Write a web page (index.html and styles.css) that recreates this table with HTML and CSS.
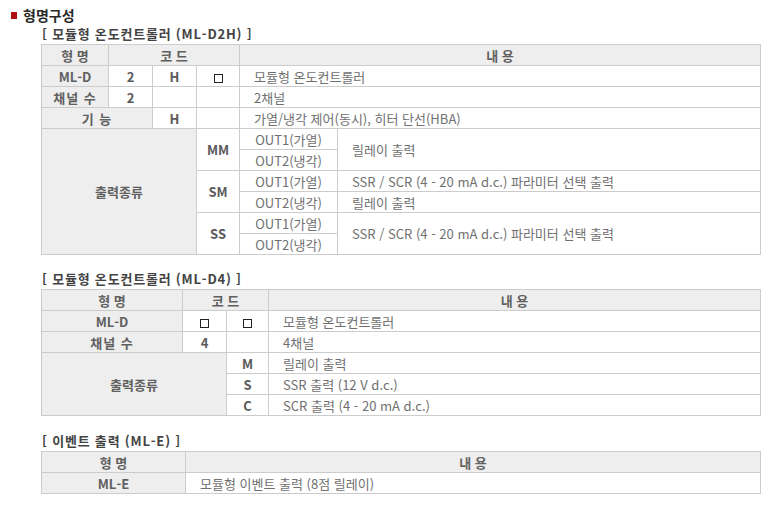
FILE: index.html
```html
<!DOCTYPE html>
<html lang="ko">
<head>
<meta charset="utf-8">
<link rel="stylesheet" href="styles.css">
</head>
<body>
<div class="page">
  <h1 class="title"><span class="mark"></span>형명구성</h1>

  <div class="section">
    <h2 class="sub">[ 모듈형 온도컨트롤러 (ML-D2H) ]</h2>
    <table class="spec">
      <colgroup><col style="width:67px"><col style="width:44px"><col style="width:44px"><col style="width:43px"><col style="width:98px"><col></colgroup>
      <tr class="head"><th>형 명</th><th colspan="3">코 드</th><th colspan="2">내 용</th></tr>
      <tr><th>ML-D</th><td class="c b">2</td><td class="c b">H</td><td class="c"><span class="box"></span></td><td colspan="2" class="t">모듈형 온도컨트롤러</td></tr>
      <tr><th class="w">채널 수</th><td class="c b">2</td><td></td><td></td><td colspan="2" class="t">2채널</td></tr>
      <tr><th colspan="2" class="w">기 능</th><td class="c b">H</td><td></td><td colspan="2" class="t">가열/냉각 제어(동시), 히터 단선(HBA)</td></tr>
      <tr><th colspan="3" rowspan="6">출력종류</th><td rowspan="2" class="c b">MM</td><td class="c">OUT1(가열)</td><td rowspan="2" class="t">릴레이 출력</td></tr>
      <tr><td class="c">OUT2(냉각)</td></tr>
      <tr><td rowspan="2" class="c b">SM</td><td class="c">OUT1(가열)</td><td class="t">SSR / SCR (4 - 20 mA d.c.) 파라미터 선택 출력</td></tr>
      <tr><td class="c">OUT2(냉각)</td><td class="t">릴레이 출력</td></tr>
      <tr><td rowspan="2" class="c b">SS</td><td class="c">OUT1(가열)</td><td rowspan="2" class="t">SSR / SCR (4 - 20 mA d.c.) 파라미터 선택 출력</td></tr>
      <tr><td class="c">OUT2(냉각)</td></tr>
    </table>
  </div>

  <div class="section">
    <h2 class="sub">[ 모듈형 온도컨트롤러 (ML-D4) ]</h2>
    <table class="spec">
      <colgroup><col style="width:141px"><col style="width:44px"><col style="width:42px"><col></colgroup>
      <tr class="head"><th>형 명</th><th colspan="2">코 드</th><th>내 용</th></tr>
      <tr><th>ML-D</th><td class="c"><span class="box"></span></td><td class="c"><span class="box"></span></td><td class="t">모듈형 온도컨트롤러</td></tr>
      <tr><th class="w">채널 수</th><td class="c b">4</td><td></td><td class="t">4채널</td></tr>
      <tr><th colspan="2" rowspan="3">출력종류</th><td class="c b">M</td><td class="t">릴레이 출력</td></tr>
      <tr><td class="c b">S</td><td class="t">SSR 출력 (12 V d.c.)</td></tr>
      <tr><td class="c b">C</td><td class="t">SCR 출력 (4 - 20 mA d.c.)</td></tr>
    </table>
  </div>

  <div class="section last">
    <h2 class="sub">[ 이벤트 출력 (ML-E) ]</h2>
    <table class="spec">
      <colgroup><col style="width:144px"><col></colgroup>
      <tr class="head"><th>형 명</th><th>내 용</th></tr>
      <tr><th>ML-E</th><td class="t">모듈형 이벤트 출력 (8점 릴레이)</td></tr>
    </table>
  </div>
</div>
</body>
</html>
```
FILE: styles.css
```css
html, body {
  margin: 0;
  padding: 0;
  background: #ffffff;
}
body {
  font-family: "Noto Sans CJK KR", "Noto Sans", sans-serif;
  font-size: 13px;
  color: #707070;
}
.page {
  padding: 6px 0 0 0;
}
.title {
  margin: 0;
  padding-left: 11px;
  display: flex;
  align-items: center;
  gap: 6px;
  font-size: 14px;
  line-height: 18px;
  font-weight: bold;
  color: #2a2a2a;
}
.mark {
  display: inline-block;
  width: 6px;
  height: 7px;
  background: #b01010;
}
.section {
  padding-left: 41px;
}
.section + .section {
  margin-top: 14px;
}
.section.last {
  margin-top: 15px;
}
.sub {
  margin: 0;
  padding-left: 1px;
  font-size: 13px;
  letter-spacing: 0.8px;
  line-height: 20px;
  height: 20px;
  font-weight: bold;
  color: #444444;
}
.spec {
  border-collapse: collapse;
  table-layout: fixed;
  width: 720px;
}
.spec th,
.spec td {
  border: 1px solid #cccccc;
  height: 21px;
  padding: 0;
  line-height: 19px;
  font-size: 13px;
  box-sizing: border-box;
  white-space: nowrap;
}
.spec th {
  background: #eeeeee;
  color: #606060;
  font-weight: bold;
  text-align: center;
}
.spec th.w {
  letter-spacing: 1px;
}
.spec td {
  background: #ffffff;
  color: #707070;
}
.spec .c {
  text-align: center;
}
.spec .b {
  font-weight: bold;
  color: #5a5a5a;
}
.spec .t {
  text-align: left;
  padding-left: 14px;
}
.box {
  display: inline-block;
  width: 9px;
  height: 9px;
  border: 1px solid #222222;
  box-sizing: border-box;
  vertical-align: -1px;
}
```
